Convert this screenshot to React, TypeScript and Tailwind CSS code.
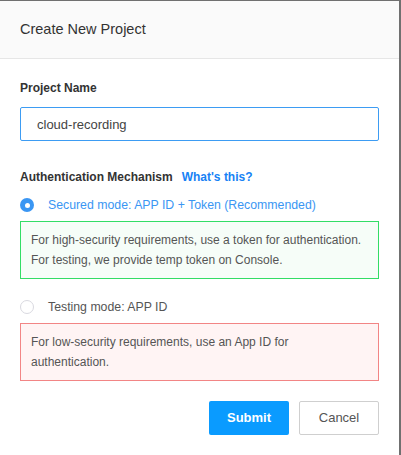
import { useState } from "react"

function Radio({ checked }: { checked: boolean }) {
  return checked ? (
    <span className="flex h-[14px] w-[14px] shrink-0 items-center justify-center rounded-full bg-[#3a96f3]">
      <span className="h-[5px] w-[5px] rounded-full bg-white" />
    </span>
  ) : (
    <span className="h-[14px] w-[14px] shrink-0 rounded-full border border-[#d9d9e0] bg-white" />
  )
}

export default function App() {
  const [name, setName] = useState("cloud-recording")

  return (
    <div
      className="h-[455px] w-[401px] overflow-hidden border-t border-r-2 border-[#707070] bg-white text-[#333]"
      style={{ fontFamily: '"Liberation Sans", Arial, sans-serif' }}
    >
      <div className="flex h-[58px] items-center border-b border-[#e6e6e6] bg-[#fafafa] px-5">
        <h2 className="text-[14.5px] text-[#333]">Create New Project</h2>
      </div>

      <div className="px-5">
        <label className="mt-[21px] block text-[12px] font-bold leading-4 text-[#333]">Project Name</label>
        <input
          value={name}
          onChange={(e) => setName(e.target.value)}
          className="mt-[11px] block h-[34px] w-full rounded-[2px] border border-[#3d9cf3] px-4 text-[13px] text-[#444] outline-none"
        />

        <div className="mt-[28px] flex items-center gap-[9px] text-[12px] font-bold leading-4">
          <span className="text-[#333]">Authentication Mechanism</span>
          <a className="text-[#1782f5]">What's this?</a>
        </div>

        <div className="mt-3 flex items-center gap-[14px] text-[12.3px] leading-4">
          <Radio checked />
          <span className="text-[#3a96f3]">Secured mode: APP ID + Token (Recommended)</span>
        </div>
        <div className="mt-2 border border-[#33dd66] bg-[#f6fdf8] px-[10px] py-2 text-[12px] leading-5 text-[#555]">
          For high-security requirements, use a token for authentication. For testing, we provide temp token on Console.
        </div>

        <div className="mt-5 flex items-center gap-[14px] text-[12.3px] leading-4">
          <Radio checked={false} />
          <span className="text-[#555]">Testing mode: APP ID</span>
        </div>
        <div className="mt-2 border border-[#f28585] bg-[#fff4f4] py-2 pl-[10px] pr-[80px] text-[12px] leading-5 text-[#555]">
          For low-security requirements, use an App ID for authentication.
        </div>

        <div className="mt-5 flex justify-end gap-[10px]">
          <button className="h-[34px] w-20 rounded-[2px] bg-[#0a9bff] text-[13px] font-bold text-white">Submit</button>
          <button className="h-[34px] w-20 rounded-[2px] border border-[#cfcfcf] bg-white text-[13px] text-[#555]">
            Cancel
          </button>
        </div>
      </div>
    </div>
  )
}
